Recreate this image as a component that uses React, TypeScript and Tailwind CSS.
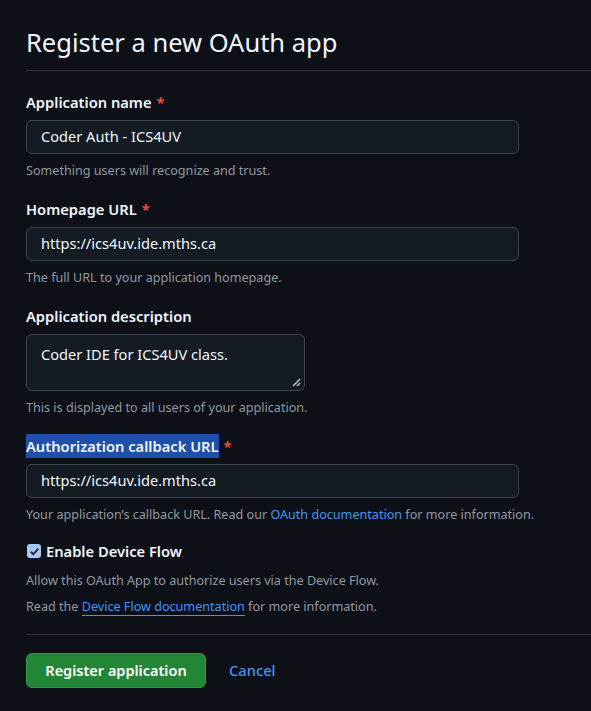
import React from "react";

const font = { fontFamily: '"Noto Sans", "Open Sans", sans-serif' };

function Label({ text, required, highlight }: { text: string; required?: boolean; highlight?: boolean }) {
  return (
    <div className="h-[24px] flex items-center text-[14.7px] font-semibold text-[#f0f6fc] leading-[24px]">
      <span className={highlight ? "inline-block h-[24px] bg-[#1d4fab]" : ""}>{text}</span>
      {required && <span className="ml-[5px] text-[#f85149]">*</span>}
    </div>
  );
}

function Input({ value }: { value: string }) {
  return (
    <div className="w-[493px] mt-[6px] h-[34px] rounded-[6px] border border-[#3d444d] bg-[#151b23] flex items-center pl-[14px] text-[14.6px] text-[#f0f6fc]">
      {value}
    </div>
  );
}

function Note({ children }: { children: React.ReactNode }) {
  return <div className="mt-[7px] h-[20px] leading-[20px] text-[12.6px] text-[#9198a1]">{children}</div>;
}

export default function App() {
  return (
    <div className="min-h-screen w-full bg-[#0d1117] pl-[26px]" style={font}>
      <div className="pt-[24px] pb-[10px] border-b border-[#30363d]">
        <h1 className="h-[36px] leading-[36px] text-[25.5px] font-normal text-[#f0f6fc]">Register a new OAuth app</h1>
      </div>

      <div className="mt-[19px]">
        <Label text="Application name" required />
        <Input value="Coder Auth - ICS4UV" />
        <Note>Something users will recognize and trust.</Note>
      </div>

      <div className="mt-[16px]">
        <Label text="Homepage URL" required />
        <Input value="https://ics4uv.ide.mths.ca" />
        <Note>The full URL to your application homepage.</Note>
      </div>

      <div className="mt-[16px]">
        <Label text="Application description" />
        <div className="relative mt-[6px] w-[279px] h-[57px] rounded-[6px] border border-[#3d444d] bg-[#151b23] pl-[14px] pt-[7px] text-[14.6px] leading-[24px] text-[#f0f6fc]">
          Coder IDE for ICS4UV class.
          <svg className="absolute right-[3px] bottom-[3px]" width="9" height="9" viewBox="0 0 9 9">
            <line x1="8" y1="1" x2="1" y2="8" stroke="#b8bcc2" strokeWidth="1.6" />
            <line x1="8" y1="5" x2="5" y2="8" stroke="#b8bcc2" strokeWidth="1.6" />
          </svg>
        </div>
        <Note>This is displayed to all users of your application.</Note>
      </div>

      <div className="mt-[16px]">
        <Label text="Authorization callback URL" required highlight />
        <Input value="https://ics4uv.ide.mths.ca" />
        <Note>
          Your application’s callback URL. Read our <span className="text-[#4493f8]">OAuth documentation</span> for more information.
        </Note>
      </div>

      <div className="mt-[14px] h-[24px] flex items-center">
        <div className="w-[14px] h-[14px] ml-[1px] rounded-[3px] bg-[#a8c7fa] flex items-center justify-center">
          <svg width="11" height="11" viewBox="0 0 11 11">
            <path d="M1.8 5.8 L4.3 8.3 L9.3 2.6" fill="none" stroke="#2b2f36" strokeWidth="2" />
          </svg>
        </div>
        <span className="ml-[5px] text-[14.7px] font-semibold text-[#f0f6fc]">Enable Device Flow</span>
      </div>
      <div className="mt-[8px] h-[20px] leading-[20px] text-[12.6px] text-[#9198a1]">
        Allow this OAuth App to authorize users via the Device Flow.
      </div>
      <div className="mt-[6px] h-[20px] leading-[20px] text-[12.6px] text-[#9198a1]">
        Read the <span className="text-[#4493f8] border-b border-[#4493f8]">Device Flow documentation</span> for more information.
      </div>

      <div className="mt-[17px] border-t border-[#30363d]" />

      <div className="mt-[18px] flex items-center">
        <div className="w-[180px] h-[35px] rounded-[6px] bg-[#238636] border border-[#2c9a43] flex items-center justify-center text-[14.5px] font-semibold text-white">
          Register application
        </div>
        <span className="ml-[23px] text-[14.7px] font-medium text-[#4493f8]">Cancel</span>
      </div>
    </div>
  );
}
